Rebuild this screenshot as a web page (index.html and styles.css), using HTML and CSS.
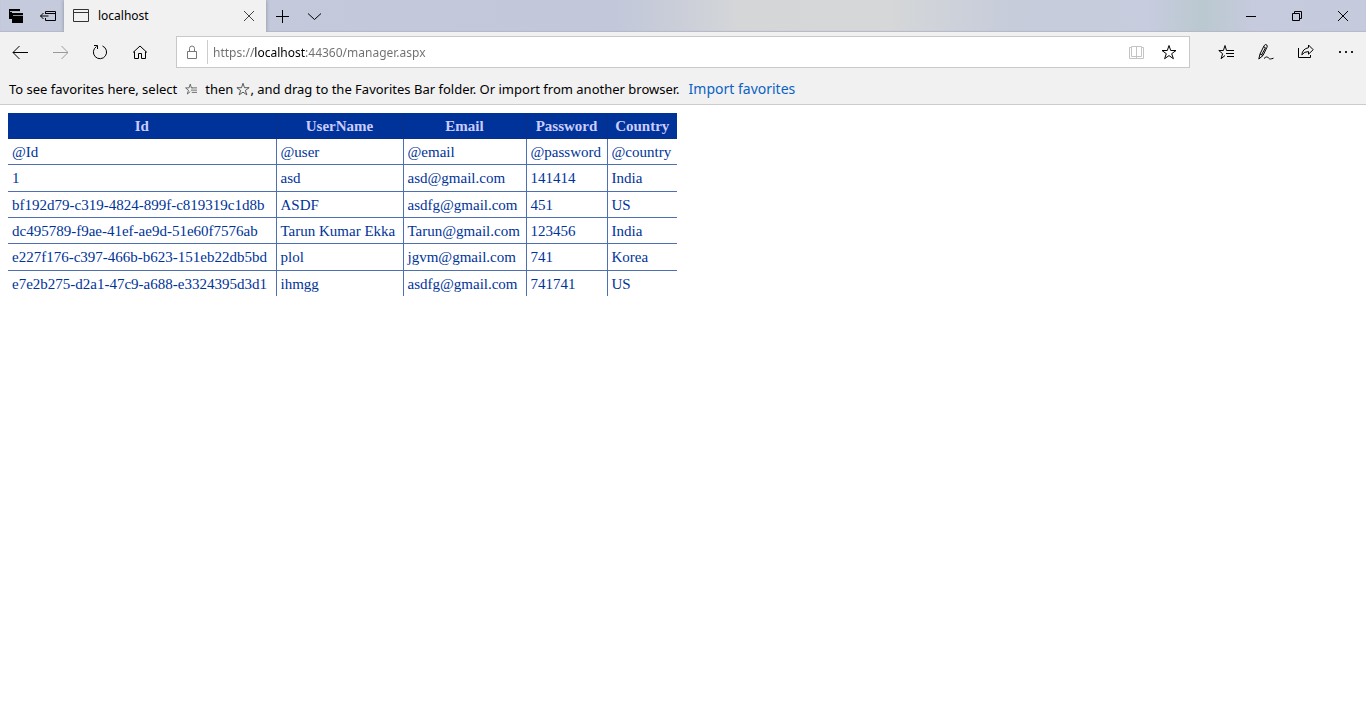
FILE: index.html
```html
<!DOCTYPE html>
<html lang="en">
<head>
<meta charset="utf-8">
<title>localhost</title>
<link rel="stylesheet" href="styles.css">
</head>
<body>
<header class="browser">
  <div class="titlebar">
    <button class="tab-tool" aria-label="Tabs you've set aside">
      <svg class="icon" viewBox="0 0 16 16"><path d="M1 1h11v3H4v7H1z" fill="#000" stroke="none"/><path d="M2 3.500h10" stroke="#aeb3c4"/><path d="M4 5h11v10H4z" fill="#000" stroke="none"/><path d="M5 7.500h10" stroke="#8d919f"/></svg>
    </button>
    <button class="tab-tool" aria-label="Set these tabs aside">
      <svg class="icon" viewBox="0 0 16 16"><path d="M5.500 6V3.500h10v9h-10V10M5.500 5.500h10M.5 8h8M3.500 5L.5 8l3 3"/></svg>
    </button>
    <div class="tab">
      <svg class="icon tab-icon" viewBox="0 0 16 16"><path d="M.5 1.500h15v12H.5zM.5 4.500h15"/></svg>
      <span class="tab-title">localhost</span>
      <button class="tab-close" aria-label="Close tab">
        <svg class="icon" viewBox="0 0 16 16"><path d="M3 3l10 10M13 3L3 13"/></svg>
      </button>
    </div>
    <button class="tab-tool" aria-label="New tab">
      <svg class="icon" viewBox="0 0 16 16"><path d="M2 8.500h13M8.500 2v13"/></svg>
    </button>
    <button class="tab-tool" aria-label="Show tab previews">
      <svg class="icon" viewBox="0 0 16 16"><path d="M2 5.500l6.500 6 6.500-6"/></svg>
    </button>
    <div class="window-buttons">
      <button class="window-button" aria-label="Minimize">
        <svg class="icon" viewBox="0 0 16 16"><path d="M3 8.500h10"/></svg>
      </button>
      <button class="window-button" aria-label="Restore">
        <svg class="icon" viewBox="0 0 16 16"><path d="M3.500 5.500h7v7h-7zM5.500 5V3.500h7v7H11"/></svg>
      </button>
      <button class="window-button" aria-label="Close">
        <svg class="icon" viewBox="0 0 16 16"><path d="M3 3l10 10M13 3L3 13"/></svg>
      </button>
    </div>
  </div>

  <nav class="toolbar" aria-label="Navigation">
    <button class="nav-button" aria-label="Back">
      <svg class="icon" viewBox="0 0 16 16"><path d="M1 8.500h15M7.500 2L1 8.500 7.500 15"/></svg>
    </button>
    <button class="nav-button disabled" aria-label="Forward" disabled>
      <svg class="icon" viewBox="0 0 16 16"><path d="M1 8.500h15M9.500 2L16 8.500 9.500 15"/></svg>
    </button>
    <button class="nav-button" aria-label="Refresh">
      <svg class="icon" viewBox="0 0 16 16"><path d="M10.500 2A6.600 6.600 0 1 1 4.500 2.500M2 1.500h3.500V5"/></svg>
    </button>
    <button class="nav-button" aria-label="Home">
      <svg class="icon" viewBox="0 0 16 16"><path d="M1 8.500l7-6.500 7 6.500M2.500 7.500v7h4v-5h3v5h4v-7"/></svg>
    </button>
    <div class="address">
      <span class="lock">
        <svg class="icon" viewBox="0 0 16 16"><path d="M3.500 7.500h9v7h-9zM5.500 7V4.500a2.500 2.500 0 0 1 5 0V7"/></svg>
      </span>
      <input class="url" type="text" aria-label="Address" value="https://localhost:44360/manager.aspx">
      <button class="address-button faded" aria-label="Reading view">
        <svg class="icon" viewBox="0 0 16 16"><path d="M7.500 3v11M2.500 2.500h10v10h-10zM2 3.500H.5v11h14v-11H13"/></svg>
      </button>
      <button class="address-button" aria-label="Add to favorites">
        <svg class="icon" viewBox="0 0 16 16"><path d="M8 1.500l1.700 5h5.300l-4.300 3.200 1.700 5L8 11.600l-4.400 3.100 1.700-5L1 6.500h5.300z"/></svg>
      </button>
    </div>
    <button class="nav-button" aria-label="Hub">
      <svg class="icon" viewBox="0 0 16 16"><path d="M10 6.500H8.500L7 1.500l-1.600 5H.8l3.800 3.200-1.500 5L7 11.500M9 6.500h7M8 9.500h8M9 12.500h7"/></svg>
    </button>
    <button class="nav-button" aria-label="Add notes">
      <svg class="icon" viewBox="0 0 16 16"><path d="M.8 15l1.200-5L6.200 1.500Q7.500-.2 9 1.200 9.500 2 9 3.200L5 11.500.8 15M5.700 2.800l1.800 1L3.500 11M2 10l3 1.500M6 14.500c2-2 3.500-2 4.500-.5s2.500 1 5 .2"/></svg>
    </button>
    <button class="nav-button" aria-label="Share">
      <svg class="icon" viewBox="0 0 16 16"><path d="M.5 4v9.500h12V11M10.500 1l4.700 4.700-4.700 4.500V7.600Q6.500 7.400 3.800 10.800 4.500 4.800 10.500 3.700z"/></svg>
    </button>
    <button class="nav-button" aria-label="Settings and more">
      <svg class="icon" viewBox="0 0 16 16"><path d="M1 7h2v2H1zM7 7h2v2H7zM13 7h2v2h-2z" fill="#222" stroke="none"/></svg>
    </button>
  </nav>

  <div class="favorites">
    <span>To see favorites here, select</span>
    <svg class="small-icon hub-mark" viewBox="0 0 16 16"><path d="M10 6.500H8.500L7 1.500l-1.600 5H.8l3.800 3.200-1.500 5L7 11.500M9 6.500h7M8 9.500h8M9 12.500h7"/></svg>
    <span>then</span>
    <svg class="small-icon star-mark" viewBox="0 0 16 16"><path d="M8 1.500l1.700 5h5.300l-4.300 3.200 1.700 5L8 11.600l-4.400 3.100 1.700-5L1 6.500h5.300z"/></svg>
    <span>, and drag to the Favorites Bar folder. Or import from another browser.</span>
    <a class="import" href="#">Import favorites</a>
  </div>
</header>

<main class="page">
  <table class="users">
    <thead>
      <tr><th class="id">Id</th><th class="name">UserName</th><th class="email">Email</th><th class="password">Password</th><th class="country">Country</th></tr>
    </thead>
    <tbody>
      <tr><td>@Id</td><td>@user</td><td>@email</td><td>@password</td><td>@country</td></tr>
      <tr><td>1</td><td>asd</td><td>asd@gmail.com</td><td>141414</td><td>India</td></tr>
      <tr><td>bf192d79-c319-4824-899f-c819319c1d8b</td><td>ASDF</td><td>asdfg@gmail.com</td><td>451</td><td>US</td></tr>
      <tr><td>dc495789-f9ae-41ef-ae9d-51e60f7576ab</td><td>Tarun Kumar Ekka</td><td>Tarun@gmail.com</td><td>123456</td><td>India</td></tr>
      <tr><td>e227f176-c397-466b-b623-151eb22db5bd</td><td>plol</td><td>jgvm@gmail.com</td><td>741</td><td>Korea</td></tr>
      <tr><td>e7e2b275-d2a1-47c9-a688-e3324395d3d1</td><td>ihmgg</td><td>asdfg@gmail.com</td><td>741741</td><td>US</td></tr>
    </tbody>
  </table>
</main>
</body>
</html>
```

FILE: styles.css
```css
* {
  box-sizing: border-box;
}

body {
  margin: 0;
  background: #fff;
  font-family: "Liberation Serif", serif;
}

button {
  display: flex;
  align-items: center;
  justify-content: center;
  flex: none;
  padding: 0;
  border: 0;
  background: transparent;
  color: #000;
}

.icon,
.small-icon {
  flex: none;
  width: 16px;
  height: 16px;
  fill: none;
  stroke: currentColor;
  stroke-width: 1;
}

.browser {
  background: #f1f1f1;
  border-bottom: 1px solid #ccc;
  color: #000;
  font-family: "Noto Sans", "Open Sans", sans-serif;
}

.titlebar {
  display: flex;
  height: 32px;
  background: linear-gradient(90deg, #c5cadc 0%, #c2c8da 45%, #c9cdd9 49%, #d4d6d8 54%, #d5d7d8 65%, #c7ccdb 74%, #c7ccde 84%, #bac8d0 88%, #c7cbde 92%, #c5cadd 100%);
  box-shadow: inset 0 -1px 1px #b4b8c8;
}

.tab-tool {
  width: 32px;
}

.tab {
  display: flex;
  align-items: center;
  width: 202px;
  padding: 0 9px;
  background: #f1f1f1;
  box-shadow: 0 0 4px #8a8e9c;
  clip-path: inset(0 -4px);
}

.tab-icon {
  color: #333;
}

.tab-title {
  flex: 1;
  margin-left: 9px;
  padding-bottom: 1px;
  font-size: 12px;
}

.tab-close {
  width: 16px;
  height: 32px;
  color: #444;
}

.window-buttons {
  display: flex;
  margin-left: auto;
}

.window-button {
  width: 46px;
}

.toolbar {
  display: flex;
  align-items: center;
  height: 40px;
}

.nav-button {
  width: 40px;
  height: 40px;
}

.disabled {
  color: #999;
}

.address {
  display: flex;
  flex: 1;
  align-items: center;
  height: 32px;
  margin: 0 16px;
  padding-right: 4px;
  border: 1px solid #c8c8c8;
  background: #fff;
}

.lock {
  display: flex;
  align-items: center;
  justify-content: center;
  width: 31px;
  height: 24px;
  border-right: 1px solid #ccc;
  color: #777;
}

.url {
  flex: 1;
  min-width: 0;
  padding: 0 0 0 5px;
  border: 0;
  outline: 0;
  background: linear-gradient(90deg, #6e6e6e 46px, #000 46px, #000 97px, #6e6e6e 97px);
  -webkit-background-clip: text;
  background-clip: text;
  color: transparent;
  font-family: inherit;
  font-size: 12px;
}

.address-button {
  width: 32px;
  height: 30px;
}

.faded {
  color: #c4c4c4;
}

.favorites {
  display: flex;
  align-items: center;
  height: 32px;
  padding: 1px 9px 0;
  font-size: 13px;
  white-space: nowrap;
}

.small-icon {
  width: 14px;
  height: 14px;
  color: #444;
}

.hub-mark {
  width: 12px;
  height: 12px;
  margin: 0 8px;
}

.star-mark {
  margin-left: 3px;
}

.import {
  margin-left: 9px;
  color: #0a63c2;
  font-size: 14px;
  text-decoration: none;
}

.page {
  padding: 8px;
}

.users {
  height: 183px;
  border-collapse: collapse;
  color: #039;
  font-size: 15px;
  line-height: 17px;
}

.users th,
.users td {
  padding: 5px 4px 3px;
  border-right: 1px solid #4e6fb2;
  border-bottom: 1px solid #4e6fb2;
  text-align: left;
  white-space: nowrap;
}

.users th {
  border-color: #0a2f85;
  background: #039;
  color: #ccf;
  text-align: center;
}

.users th:last-child,
.users td:last-child {
  border-right: 0;
}

.users tr:last-child td {
  border-bottom: 0;
}

.id {
  width: 268px;
}

.name {
  width: 127px;
}

.email {
  width: 123px;
}

.password {
  width: 81px;
}

.country {
  width: 70px;
}
```
